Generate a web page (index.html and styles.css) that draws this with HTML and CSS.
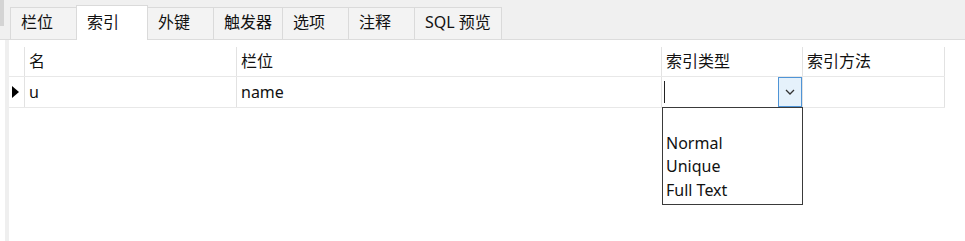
FILE: index.html
```html
<!DOCTYPE html>
<html lang="zh-CN">
<head>
    <meta charset="UTF-8">
    <title>索引</title>
    <link rel="stylesheet" href="styles.css">
</head>
<body>
    <div class="tabbar">
        <div class="tab">栏位</div>
        <div class="tab active">索引</div>
        <div class="tab">外键</div>
        <div class="tab">触发器</div>
        <div class="tab">选项</div>
        <div class="tab">注释</div>
        <div class="tab wide">SQL 预览</div>
    </div>

    <div class="content">
        <div class="strip"></div>
        <div class="grid">
            <div class="row head">
                <div class="cell ind"></div>
                <div class="cell c-name">名</div>
                <div class="cell c-field">栏位</div>
                <div class="cell c-type">索引类型</div>
                <div class="cell c-method">索引方法</div>
            </div>
            <div class="row">
                <div class="cell ind">
                    <svg width="7" height="12" viewBox="0 0 7 12"><path d="M0 0 L7 6 L0 12 Z" fill="#000"/></svg>
                </div>
                <div class="cell c-name">u</div>
                <div class="cell c-field">name</div>
                <div class="cell c-type combo">
                    <span class="caret"></span>
                    <span class="drop-btn">
                        <svg width="10" height="6" viewBox="0 0 10 6"><path d="M1 1 L5 5 L9 1" fill="none" stroke="#333" stroke-width="1.3"/></svg>
                    </span>
                    <div class="droplist">
                        <div class="item"></div>
                        <div class="item">Normal</div>
                        <div class="item">Unique</div>
                        <div class="item">Full Text</div>
                    </div>
                </div>
                <div class="cell c-method"></div>
            </div>
        </div>
    </div>
</body>
</html>
```

FILE: styles.css
```css
body {
    margin: 0;
    background-color: #fff;
    font-family: "Noto Sans", "Noto Sans CJK SC", sans-serif;
    font-size: 16px;
    color: #111;
}

.tabbar {
    display: flex;
    align-items: flex-end;
    height: 39px;
    padding-left: 10px;
    background: linear-gradient(#d4d4d4, #d4d4d4) 0 0 / 4px 26px no-repeat, #f0f0f0;
    border-bottom: 1px solid #dcdcdc;
}

.tab {
    box-sizing: border-box;
    height: 32px;
    min-width: 67px;
    padding: 0 10px;
    line-height: 29px;
    background-color: #f3f3f3;
    border: 1px solid #dadada;
    border-bottom: none;
    margin-right: -1px;
}

.tab.active {
    height: 35px;
    min-width: 72px;
    line-height: 32px;
    background-color: #fff;
    position: relative;
    margin-bottom: -1px;
    z-index: 1;
}

.tab.wide {
    min-width: 86px;
}

.content {
    display: flex;
    height: 201px;
}

.strip {
    width: 4px;
    margin-left: 5px;
    background-color: #efefef;
}

.grid {
    padding-top: 7px;
}

.row {
    display: flex;
    height: 30px;
    border-bottom: 1px solid #e8e8e8;
}

.row.head {
    height: 29px;
}

.cell {
    box-sizing: border-box;
    padding-left: 4px;
    line-height: 30px;
    border-right: 1px solid #e2e2e2;
    white-space: nowrap;
}

.cell.ind {
    width: 16px;
    padding-left: 3px;
    display: flex;
    align-items: center;
}

.c-name { width: 212px; }
.c-field { width: 425px; }
.c-type { width: 141px; }
.c-method { width: 142px; }

.row.head .cell {
    line-height: 29px;
}

.combo {
    position: relative;
    display: flex;
    align-items: center;
    padding-left: 2px;
}

.caret {
    width: 1px;
    height: 22px;
    background-color: #222;
}

.drop-btn {
    box-sizing: border-box;
    margin-left: auto;
    width: 24px;
    height: 30px;
    background-color: #e5f1fb;
    border: 1px solid #4f94d6;
    display: flex;
    align-items: center;
    justify-content: center;
}

.droplist {
    position: absolute;
    left: 0;
    top: 30px;
    box-sizing: border-box;
    width: 141px;
    height: 98px;
    background-color: #fff;
    border: 1px solid #3a3a3a;
    z-index: 2;
}

.item {
    height: 23.5px;
    line-height: 23px;
    padding-left: 3px;
}
```
